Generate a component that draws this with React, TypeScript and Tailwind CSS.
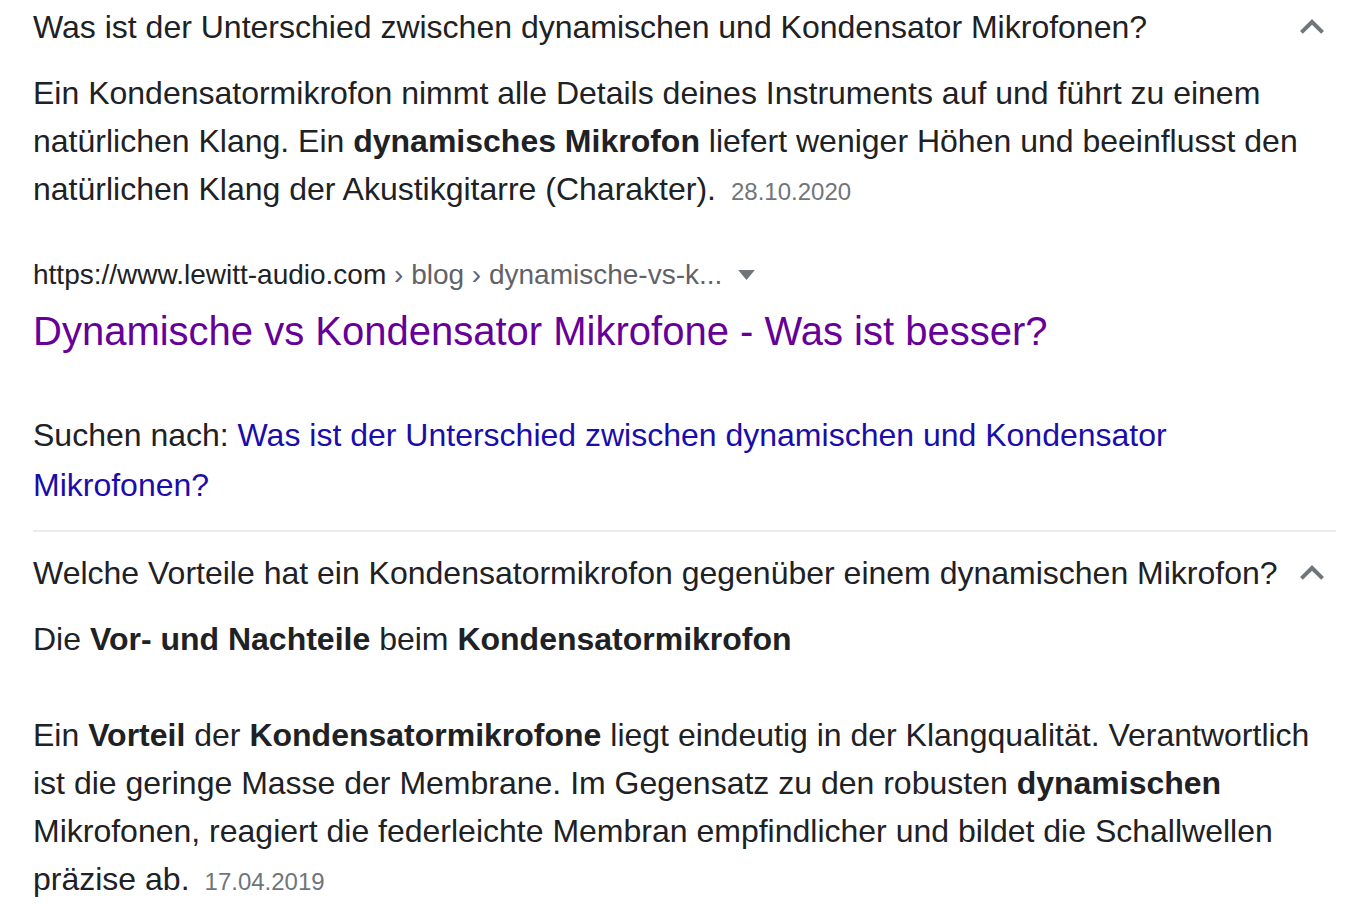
import React from 'react';

const ChevronUp = () => (
  <svg viewBox="0 0 24 24" className="w-12 h-12 shrink-0" fill="#70757a">
    <path d="M12 8l-6 6 1.41 1.41L12 10.83l4.59 4.58L18 14z" />
  </svg>
);

const Question = ({ text }: { text: string }) => (
  <div className="h-[54px] flex items-center justify-between">
    <span className="text-[32px] leading-[48px] text-[#202124]">{text}</span>
    <ChevronUp />
  </div>
);

export default function App() {
  return (
    <main
      className="min-h-screen bg-white pl-[33px] pr-[12px] text-[#202124]"
      style={{ fontFamily: '"Liberation Sans", Arial, sans-serif' }}
    >
      {/* Frage 1 */}
      <Question text="Was ist der Unterschied zwischen dynamischen und Kondensator Mikrofonen?" />

      <p className="mt-[15px] text-[32px] leading-[48px]">
        Ein Kondensatormikrofon nimmt alle Details deines Instruments auf und führt zu einem natürlichen Klang. Ein{' '}
        <b className="font-bold">dynamisches Mikrofon</b> liefert weniger Höhen und beeinflusst den natürlichen Klang der
        Akustikgitarre (Charakter).
        <span className="ml-[15px] text-[24px] text-[#70757a]">28.10.2020</span>
      </p>

      <div className="mt-[39px] h-[40px] flex items-center text-[28px]">
        <span className="text-[#202124]">https://www.lewitt-audio.com</span>
        <span className="text-[#5f6368] whitespace-pre"> › blog › dynamische-vs-k...</span>
        <svg viewBox="0 0 10 6" className="ml-[16px] w-[17px] h-[10px]" fill="#70757a">
          <path d="M0 0h10L5 6z" />
        </svg>
      </div>

      <h3 className="mt-[10px] text-[40px] leading-[52px] text-[#660099]">
        Dynamische vs Kondensator Mikrofone - Was ist besser?
      </h3>

      <p className="mt-[53px] text-[32px] leading-[50px]">
        Suchen nach:{' '}
        <a className="text-[#1a0dab]">Was ist der Unterschied zwischen dynamischen und Kondensator Mikrofonen?</a>
      </p>

      <div className="mt-[20px] h-[2px] bg-[#ebebeb]" />

      {/* Frage 2 */}
      <div className="mt-[14px]">
        <Question text="Welche Vorteile hat ein Kondensatormikrofon gegenüber einem dynamischen Mikrofon?" />
      </div>

      <p className="mt-[15px] text-[32px] leading-[48px]">
        Die <b className="font-bold">Vor- und Nachteile</b> beim <b className="font-bold">Kondensatormikrofon</b>
      </p>

      <p className="mt-[48px] text-[32px] leading-[48px]">
        Ein <b className="font-bold">Vorteil</b> der <b className="font-bold">Kondensatormikrofone</b> liegt eindeutig in
        der Klangqualität. Verantwortlich ist die geringe Masse der Membrane. Im Gegensatz zu den robusten{' '}
        <b className="font-bold">dynamischen</b> Mikrofonen, reagiert die federleichte Membran empfindlicher und bildet
        die Schallwellen präzise ab.
        <span className="ml-[15px] text-[24px] text-[#70757a]">17.04.2019</span>
      </p>
    </main>
  );
}
